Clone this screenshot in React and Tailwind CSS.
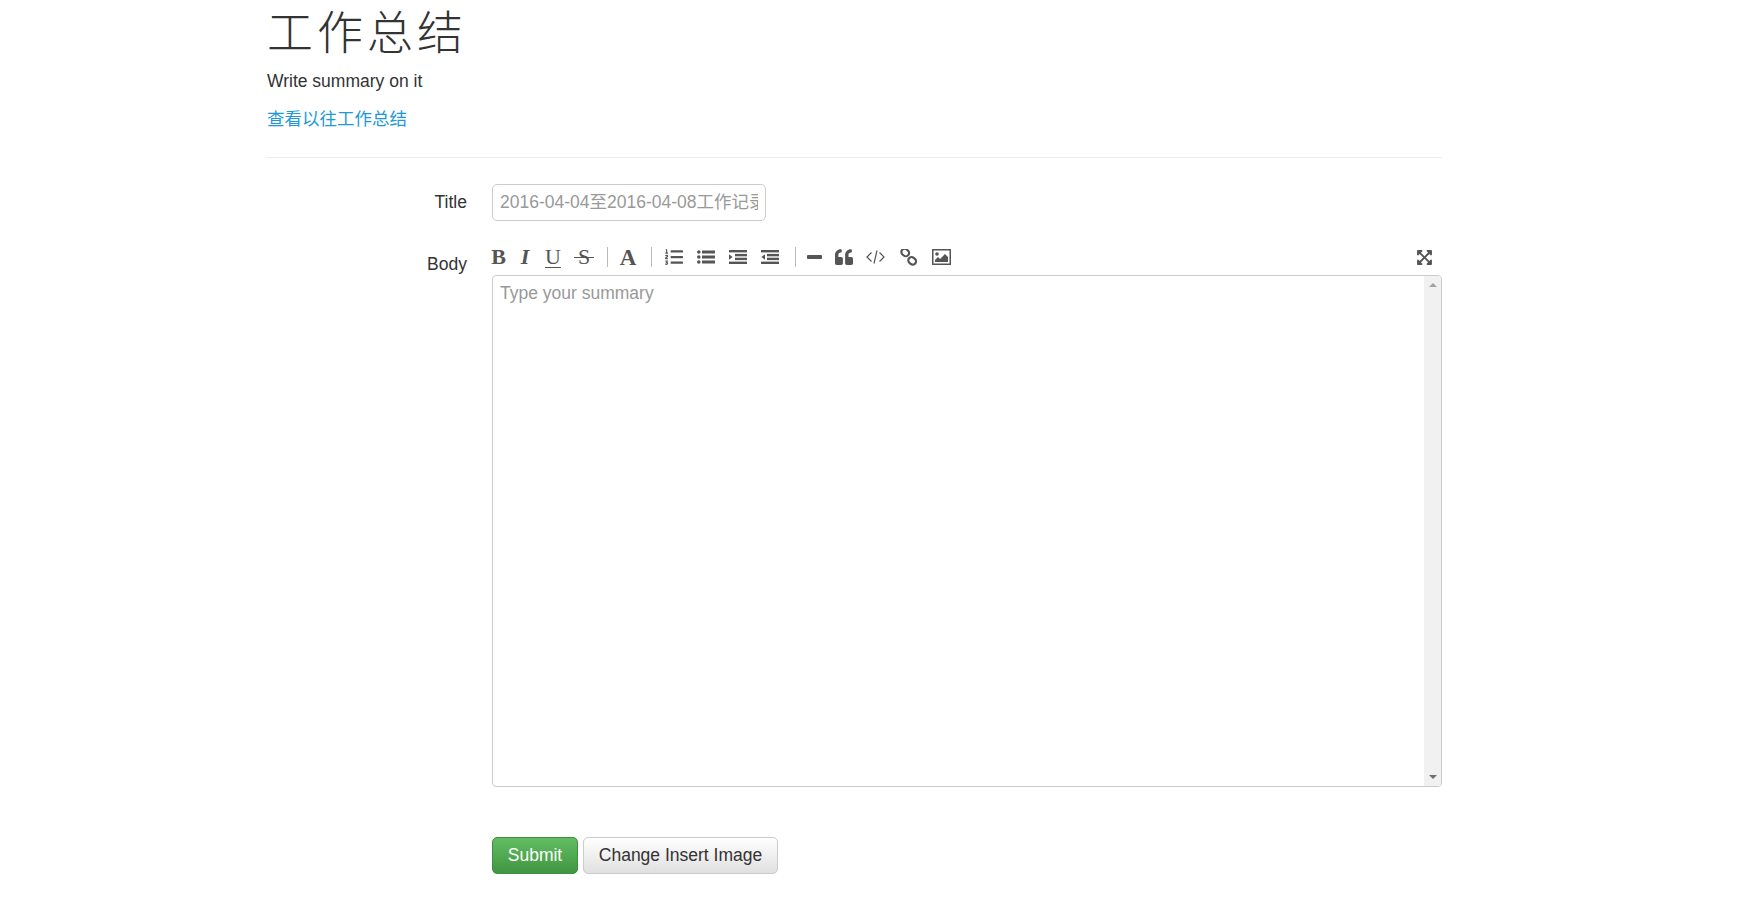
import { FaListOl, FaQuoteLeft, FaExpandArrowsAlt } from 'react-icons/fa';

const CJK = 'font-["Liberation_Sans","Noto_Sans_CJK_SC",sans-serif]';

function TextIcon({ children, className }) {
    return (
        <span className={`flex justify-center font-["Liberation_Serif",serif] text-[22px] leading-none text-[#555] ${className}`}>
            {children}
        </span>
    );
}

function Icon({ children, className = 'w-[32px]' }) {
    return <span className={`flex justify-center text-[#555] ${className}`}>{children}</span>;
}

function Divider({ className }) {
    return <span className={`w-px h-[20px] bg-[#bbb] ${className}`} />;
}

function Toolbar() {
    return (
        <div className="flex items-center h-[32px] -ml-[8px]">
            <TextIcon className="w-[29px] font-bold">B</TextIcon>
            <TextIcon className="w-[24px] italic font-bold">I</TextIcon>
            <TextIcon className="w-[32px] underline underline-offset-[3px] decoration-1">U</TextIcon>
            <TextIcon className="w-[30px] relative">
                S
                <span className="absolute left-[5px] right-[5px] top-[11px] h-px bg-[#555]" />
            </TextIcon>
            <Divider className="ml-[8px] mr-[6px]" />
            <TextIcon className="w-[28px] font-bold text-[23px]">A</TextIcon>
            <Divider className="ml-[9px] mr-[6px]" />
            <Icon><FaListOl size={18} /></Icon>
            <Icon>
                <svg width="18" height="14" viewBox="0 0 18 14" fill="#555">
                    <circle cx="1.8" cy="2" r="1.8" /><circle cx="1.8" cy="7" r="1.8" /><circle cx="1.8" cy="12" r="1.8" />
                    <rect x="5" y="0.5" width="13" height="3" /><rect x="5" y="5.5" width="13" height="3" /><rect x="5" y="10.5" width="13" height="3" />
                </svg>
            </Icon>
            <Icon>
                <svg width="18" height="14" viewBox="0 0 18 14" fill="#555">
                    <rect width="18" height="2.4" /><rect x="6" y="3.9" width="12" height="2.4" /><rect x="6" y="7.7" width="12" height="2.4" /><rect y="11.6" width="18" height="2.4" />
                    <path d="M0 4.2v5.6L3.6 7z" />
                </svg>
            </Icon>
            <Icon>
                <svg width="18" height="14" viewBox="0 0 18 14" fill="#555">
                    <rect width="18" height="2.4" /><rect x="6" y="3.9" width="12" height="2.4" /><rect x="6" y="7.7" width="12" height="2.4" /><rect y="11.6" width="18" height="2.4" />
                    <path d="M4 4.2v5.6L0.4 7z" />
                </svg>
            </Icon>
            <Divider className="ml-[9px] mr-[3px]" />
            <Icon className="w-[30px]">
                <svg width="15" height="16" viewBox="0 0 15 16"><rect x="0" y="6" width="15" height="4" rx="1" fill="#555" /></svg>
            </Icon>
            <Icon className="w-[30px]"><FaQuoteLeft size={18} /></Icon>
            <Icon className="w-[33px]">
                <svg width="19" height="16" viewBox="0 0 19 16" fill="none" stroke="#555" strokeWidth="1.2">
                    <path d="M5.5 3.5 1 8l4.5 4.5M13.5 3.5 18 8l-4.5 4.5M11 1.5 8 14.5" />
                </svg>
            </Icon>
            <Icon>
                <svg width="17" height="17" viewBox="0 0 17 17" fill="none" stroke="#555" strokeWidth="2.2">
                    <rect x="1.5" y="0" width="8" height="6.5" rx="3.2" transform="rotate(40 5 3)" />
                    <rect x="8" y="8.5" width="8" height="6.5" rx="3.2" transform="rotate(40 12 12)" />
                </svg>
            </Icon>
            <Icon className="w-[34px]">
                <svg width="19" height="16" viewBox="0 0 19 16">
                    <rect x="0.75" y="0.75" width="17.5" height="14.5" fill="none" stroke="#555" strokeWidth="1.5" />
                    <circle cx="5" cy="5" r="1.8" fill="#555" />
                    <path d="M3 13v-2l3-3 2 2 5-5 3 3v5z" fill="#555" />
                </svg>
            </Icon>
            <span className="ml-auto mr-[9px] text-[#555]"><FaExpandArrowsAlt size={17} /></span>
        </div>
    );
}

function Scrollbar() {
    return (
        <div className="w-[17px] bg-[#f1f1f1] flex flex-col justify-between items-center py-[7px]">
            <span className="w-0 h-0 border-x-[4px] border-x-transparent border-b-[4px] border-b-[#a3a3a3]" />
            <span className="w-0 h-0 border-x-[4px] border-x-transparent border-t-[4px] border-t-[#6f6f6f]" />
        </div>
    );
}

export default function App() {
    return (
        <div className={`min-h-screen bg-white text-[#333] ${CJK}`}>
            <div className="w-[1176px] ml-[266px]">
                <h1 className='pt-[3px] h-[62px] text-[46px] leading-[52px] font-light tracking-[4px] ml-[1px] font-["Noto_Sans_CJK_SC",serif] text-[#333]'>工作总结</h1>
                <p className="mt-[6px] ml-[1px] text-[17.5px] leading-[26px]">Write summary on it</p>
                <a href="#" className="block mt-[12px] ml-[1px] text-[17.5px] leading-[26px] text-[#1d9ad6]">查看以往工作总结</a>
                <hr className="mt-[25px] border-[#eee]" />

                <div className="flex mt-[26px]">
                    <label className="w-[201px] text-right text-[17.5px] leading-[37px]">Title</label>
                    <input
                        placeholder="2016-04-04至2016-04-08工作记录"
                        className="ml-[25px] w-[274px] h-[37px] px-[7px] border border-[#ccc] rounded-[5px] text-[17.5px] placeholder:text-[#999] outline-none"
                    />
                </div>

                <div className="flex mt-[20px]">
                    <label className="w-[201px] text-right text-[17.5px] leading-[37px] pt-[5px]">Body</label>
                    <div className="ml-[25px] flex-1">
                        <Toolbar />
                        <div className="flex mt-[2px] h-[512px] border border-[#ccc] rounded-[4px] overflow-hidden">
                            <textarea
                                placeholder="Type your summary"
                                className="flex-1 resize-none px-[7px] py-[4px] text-[17.5px] leading-[26px] placeholder:text-[#999] outline-none"
                            />
                            <Scrollbar />
                        </div>
                        <div className="flex gap-[5px] mt-[50px]">
                            <button className="w-[86px] h-[37px] rounded-[5px] border border-[#3e8f3e] bg-linear-to-b from-[#62bd62] to-[#419641] text-white text-[17.5px]">Submit</button>
                            <button className="w-[195px] h-[37px] rounded-[5px] border border-[#ccc] bg-linear-to-b from-white to-[#e0e0e0] text-[17.5px] text-[#333]">Change Insert Image</button>
                        </div>
                    </div>
                </div>
            </div>
        </div>
    );
}
